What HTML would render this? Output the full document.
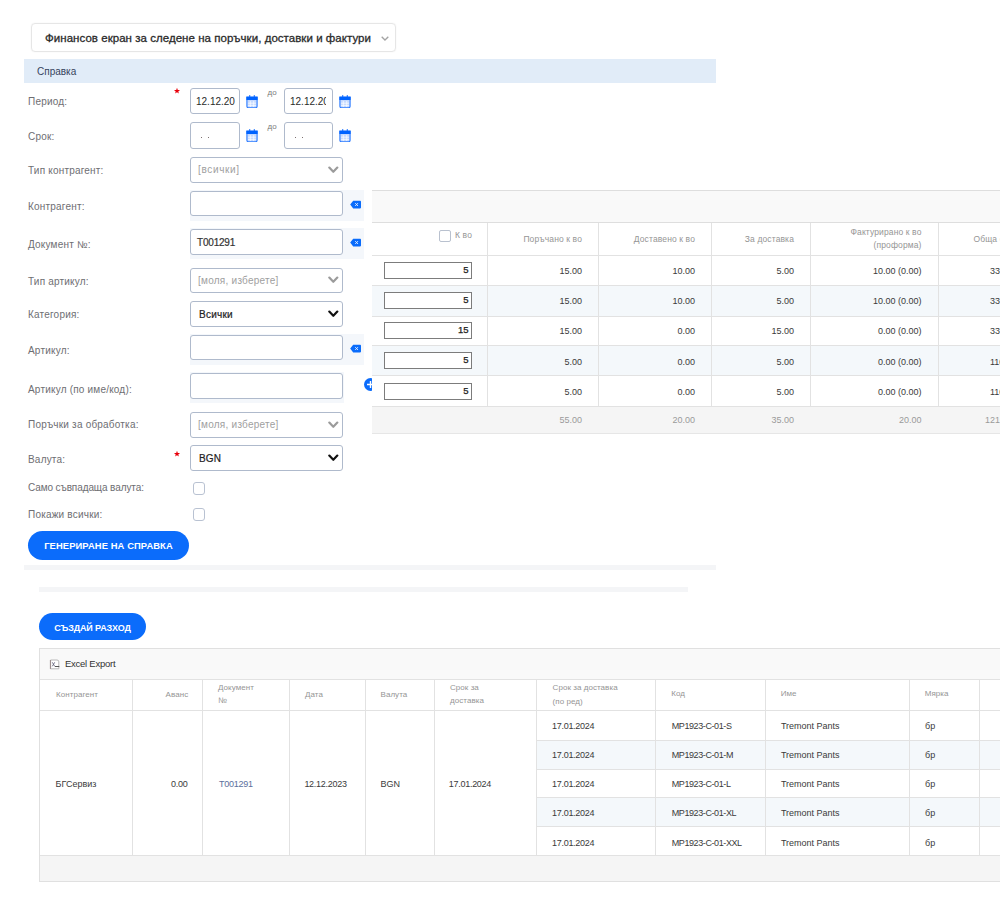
<!DOCTYPE html>
<html><head><meta charset="utf-8">
<style>
*{box-sizing:border-box;margin:0;padding:0}
html,body{width:1000px;height:924px;overflow:hidden;background:#fff}
body{position:relative;font-family:"Liberation Sans",sans-serif;color:#333;font-size:10px}
.a{position:absolute;white-space:nowrap}
.lbl{position:absolute;left:28px;color:#6e6e72;font-size:10px;line-height:12px;white-space:nowrap;letter-spacing:0.2px}
.inp{position:absolute;left:190px;border:1.5px solid #afbacc;border-radius:3px;background:#fff}
.sel{width:153px;height:26px}
.sel .t{position:absolute;left:6px;top:7px;font-size:10px;line-height:12px;color:#333;letter-spacing:-0.2px}
.sel .t.ph{color:#a0a0a0;letter-spacing:0.25px;left:7px;top:6.2px}
.chev{position:absolute;right:3.5px;top:7.6px;width:11px;height:8px}
.bgband{position:absolute;left:190px;background:#f4f7fb}
.clr{position:absolute;left:350px;width:11px;height:9px}
.star{position:absolute;left:175px;color:#e01515;font-size:10px;line-height:10px}
.cal{position:absolute;width:12px;height:13px}
.do{position:absolute;font-size:8px;color:#7a7a7a;line-height:8px}
.btn{position:absolute;background:#0b6cfb;border-radius:15px;color:#fff;font-weight:bold;font-size:9px;text-align:center;letter-spacing:0.1px}
.band{position:absolute;background:#f4f5f7}
/* top table */
#tt{position:absolute;left:372px;top:190px;width:640px;height:244px;background:#fff;overflow:hidden}
#tt .hd{position:absolute;left:0;top:0;width:100%;height:33px;background:#f9f9f9;border-top:1px solid #dedede;border-bottom:1px solid #dedede}
.vl{position:absolute;width:1px;background:#e2e2e2}
.hl{position:absolute;height:1px;background:#e2e2e2}
.row{position:absolute;left:0;width:100%}
.alt{background:#f4f8fb}
.th{position:absolute;color:#959595;font-size:8.5px;line-height:10px;white-space:nowrap;letter-spacing:0.12px}
.td{position:absolute;color:#3a3a3a;font-size:9px;line-height:10px;white-space:nowrap}
.rin{position:absolute;left:12px;width:88px;height:17px;border:1.5px solid #7c7c7c;background:#fff;font-size:9.5px;text-align:right;padding-right:2.5px;line-height:14px;color:#222;-webkit-text-stroke:0.25px #222}
/* bottom table */
#bt{position:absolute;left:39px;top:648px;width:980px;height:234px;border:1px solid #e0e0e0;border-right:none;background:#fff;overflow:hidden}
.b8{font-size:8px;letter-spacing:0.05px}
</style></head><body>
<svg width="0" height="0" style="position:absolute">
<defs>
<symbol id="calg" viewBox="0 0 12 13"><rect x="3" y="0.2" width="1.3" height="2.5" fill="#2a7bff"/><rect x="7.7" y="0.2" width="1.3" height="2.5" fill="#2a7bff"/><path d="M0.9 2 H11.1 V11.2 a1.6 1.6 0 0 1 -1.6 1.6 H2.5 a1.6 1.6 0 0 1 -1.6 -1.6 Z" fill="#c4d9ff" stroke="#2f7dff" stroke-width="1.1"/><rect x="0.4" y="1.8" width="11.2" height="3.2" fill="#0063ff"/><g stroke="#ffffff" stroke-width="0.7"><path d="M4.3 6 V12 M7.7 6 V12 M2 8.2 H10 M2 10.4 H10"/></g></symbol>
<symbol id="clrg" viewBox="0 0 11 9"><path d="M0.2 4.6 L3.2 0.8 H10.2 Q11 0.8 11 1.6 V7.6 Q11 8.4 10.2 8.4 H3.2 Z" fill="#0a6cfb"/><path d="M5.3 3.2 L7.9 5.9 M7.9 3.2 L5.3 5.9" stroke="#e8f0ff" stroke-width="1"/></symbol>
<symbol id="chevg" viewBox="0 0 11 8"><path d="M1.3 1.6 L5.3 5.8 L9.3 1.6" fill="none" stroke-width="2.2" stroke-linecap="round" stroke-linejoin="round"/></symbol>
</defs></svg>


<!-- dropdown -->
<div class="a" style="left:31px;top:23px;width:365px;height:28.5px;border:1px solid #e6e6e6;border-radius:4px;box-shadow:0 0 1.5px rgba(0,0,0,0.08)">
  <div class="a" style="left:13px;top:7px;font-size:11.5px;line-height:14px;color:#2a2a2a;-webkit-text-stroke:0.3px #2a2a2a;letter-spacing:0.04px">Финансов екран за следене на поръчки, доставки и фактури</div>
  <svg class="a" style="left:349px;top:11.5px" width="8" height="5" viewBox="0 0 8 5"><path d="M0.7 0.7 L4 4 L7.3 0.7" fill="none" stroke="#a3a3a3" stroke-width="1.3"/></svg>
</div>

<!-- Справка band -->
<div class="a" style="left:24px;top:59px;width:692px;height:24px;background:#e1ecf8"></div>
<div class="a" style="left:37px;top:66px;font-size:10px;line-height:12px;color:#36435c">Справка</div>

<!-- labels -->
<div class="lbl" style="top:96px">Период:</div>
<div class="lbl" style="top:131px">Срок:</div>
<div class="lbl" style="top:165px">Тип контрагент:</div>
<div class="lbl" style="top:201px">Контрагент:</div>
<div class="lbl" style="top:239px">Документ №:</div>
<div class="lbl" style="top:276px">Тип артикул:</div>
<div class="lbl" style="top:309px">Категория:</div>
<div class="lbl" style="top:345px">Артикул:</div>
<div class="lbl" style="top:384px">Артикул (по име/код):</div>
<div class="lbl" style="top:419px">Поръчки за обработка:</div>
<div class="lbl" style="top:454px">Валута:</div>
<div class="lbl" style="top:482px;letter-spacing:-0.1px">Само съвпадаща валута:</div>
<div class="lbl" style="top:509px">Покажи всички:</div>

<svg class="a" style="left:172.8px;top:87.3px" width="8" height="8"><polygon points="4.00,0.80 4.79,2.91 7.04,3.01 5.28,4.42 5.88,6.59 4.00,5.35 2.12,6.59 2.72,4.42 0.96,3.01 3.21,2.91" fill="#e8000b"/></svg>
<svg class="a" style="left:172.8px;top:450px" width="8" height="8"><polygon points="4.00,0.80 4.79,2.91 7.04,3.01 5.28,4.42 5.88,6.59 4.00,5.35 2.12,6.59 2.72,4.42 0.96,3.01 3.21,2.91" fill="#e8000b"/></svg>

<!-- date inputs -->
<div class="inp" style="top:88px;width:49.5px;height:26px"><div class="a" style="left:5px;top:6.5px;font-size:10px;line-height:12px;color:#2a2a2a">12.12.20</div></div>
<div class="inp" style="left:283.5px;top:88px;width:49.5px;height:26px"><div class="a" style="left:5.5px;top:6.5px;width:36px;overflow:hidden;font-size:10px;line-height:12px;color:#2a2a2a">12.12.20</div></div>
<div class="inp" style="top:122px;width:49.5px;height:26.5px"><div class="a" style="left:9.6px;top:13.7px;width:1.6px;height:1.6px;background:#7c7070"></div><div class="a" style="left:16.8px;top:13.7px;width:1.6px;height:1.6px;background:#7c7070"></div></div>
<div class="inp" style="left:283.5px;top:122px;width:49.5px;height:26.5px"><div class="a" style="left:10.2px;top:13.7px;width:1.6px;height:1.6px;background:#7c7070"></div><div class="a" style="left:17.4px;top:13.7px;width:1.6px;height:1.6px;background:#7c7070"></div></div>
<div class="do" style="left:267.5px;top:88.5px">до</div>
<div class="do" style="left:267.5px;top:122.5px">до</div>



<!-- calendar icons -->
<svg class="cal" style="left:245.5px;top:95px"><use href="#calg"/></svg>
<svg class="cal" style="left:338.5px;top:95px"><use href="#calg"/></svg>
<svg class="cal" style="left:245.5px;top:129px"><use href="#calg"/></svg>
<svg class="cal" style="left:338.5px;top:129px"><use href="#calg"/></svg>

<!-- light bands behind inputs -->
<div class="bgband" style="top:190px;width:174px;height:31px"></div>
<div class="bgband" style="top:228px;width:174px;height:31px"></div>
<div class="bgband" style="top:334px;width:174px;height:31px"></div>
<div class="bgband" style="top:372px;width:154px;height:31px"></div>

<!-- selects / inputs -->
<div class="inp sel" style="top:157px"><div class="t ph" style="letter-spacing:0.65px">[всички]</div><svg class="chev" style="stroke:#9b9b9b"><use href="#chevg"/></svg></div>
<div class="inp sel" style="top:190.6px;height:25.8px"></div>
<svg class="clr" style="top:200px"><use href="#clrg"/></svg>
<div class="inp sel" style="top:228.6px;height:26.6px"><div class="t" style="-webkit-text-stroke:0.2px #333">T001291</div></div>
<svg class="clr" style="top:238px"><use href="#clrg"/></svg>
<div class="inp sel" style="top:267.8px;height:25.6px"><div class="t ph">[моля, изберете]</div><svg class="chev" style="stroke:#9b9b9b"><use href="#chevg"/></svg></div>
<div class="inp sel" style="top:301.2px;height:25.6px"><div class="t" style="color:#222;left:8px;letter-spacing:0.25px;-webkit-text-stroke:0.2px #222">Всички</div><svg class="chev" style="stroke:#111"><use href="#chevg"/></svg></div>
<div class="inp sel" style="top:334.7px;height:25.8px"></div>
<svg class="clr" style="top:344px"><use href="#clrg"/></svg>
<div class="inp sel" style="top:372.8px;height:26.7px"></div>
<svg class="a" style="left:363.8px;top:378px" width="13" height="13" viewBox="0 0 13 13"><circle cx="6.5" cy="6.5" r="6.5" fill="#0b6cfb"/><path d="M6.5 3 V10 M3 6.5 H10" stroke="#fff" stroke-width="1.4"/></svg>
<div class="inp sel" style="top:412px;height:25.8px"><div class="t ph">[моля, изберете]</div><svg class="chev" style="stroke:#9b9b9b"><use href="#chevg"/></svg></div>
<div class="inp sel" style="top:445.3px;height:25.8px"><div class="t" style="color:#222;left:8px;letter-spacing:0.1px;-webkit-text-stroke:0.2px #222">BGN</div><svg class="chev" style="stroke:#111"><use href="#chevg"/></svg></div>

<!-- checkboxes -->
<div class="a" style="left:193px;top:482px;width:12px;height:12.5px;border:1.7px solid #b9c2d2;border-radius:3px;background:#fff"></div>
<div class="a" style="left:193px;top:508.3px;width:12px;height:12.7px;border:1.7px solid #b9c2d2;border-radius:3px;background:#fff"></div>

<!-- generate button -->
<div class="btn" style="left:28px;top:531px;width:161px;height:29px;line-height:30px;font-size:9.4px;letter-spacing:0.1px">ГЕНЕРИРАНЕ НА СПРАВКА</div>

<div class="band" style="left:24px;top:565px;width:692px;height:5px"></div>
<div class="band" style="left:39px;top:587px;width:649px;height:5px"></div>

<div class="btn" style="left:39px;top:613px;width:107px;height:27px;line-height:30px;font-size:9px;letter-spacing:-0.12px">СЪЗДАЙ РАЗХОД</div>

<!-- top table -->
<div id="tt">
<div class="hd"></div>
<div class="row alt" style="top:95px;height:31px"></div>
<div class="row alt" style="top:155px;height:30px"></div>
<div class="hl" style="left:0;width:640px;top:65px"></div>
<div class="hl" style="left:0;width:640px;top:95px"></div>
<div class="hl" style="left:0;width:640px;top:126px"></div>
<div class="hl" style="left:0;width:640px;top:155px"></div>
<div class="hl" style="left:0;width:640px;top:185px"></div>
<div class="hl" style="left:0;width:640px;top:216px"></div>
<div class="row" style="top:217px;height:26px;background:#f5f5f5"></div>
<div class="hl" style="left:0;width:640px;top:243px;background:#e6e6e6"></div>
<div class="vl" style="left:115px;top:33px;height:183px"></div>
<div class="vl" style="left:226px;top:33px;height:183px"></div>
<div class="vl" style="left:339px;top:33px;height:183px"></div>
<div class="vl" style="left:438px;top:33px;height:183px"></div>
<div class="vl" style="left:566px;top:33px;height:183px"></div>
<div class="a" style="left:67px;top:40px;width:12px;height:12px;border:1.5px solid #b9c1cf;border-radius:2px"></div>
<div class="th" style="right:540px;top:40.0px">К во</div>
<div class="th" style="right:430px;top:43.5px">Поръчано к во</div>
<div class="th" style="right:317px;top:43.5px">Доставено к во</div>
<div class="th" style="right:218px;top:43.5px">За доставка</div>
<div class="th" style="right:90.5px;top:37.0px">Фактурирано к во</div>
<div class="th" style="right:90.5px;top:50.0px">(проформа)</div>
<div class="th" style="left:601.5px;top:43.5px">Обща сума</div>
<div class="rin" style="top:71.5px">5</div>
<div class="td" style="right:430px;top:75.5px">15.00</div>
<div class="td" style="right:317px;top:75.5px">10.00</div>
<div class="td" style="right:218px;top:75.5px">5.00</div>
<div class="td" style="right:90.5px;top:75.5px">10.00 (0.00)</div>
<div class="td" style="left:618px;top:75.5px">330.00</div>
<div class="rin" style="top:102.0px">5</div>
<div class="td" style="right:430px;top:106.0px">15.00</div>
<div class="td" style="right:317px;top:106.0px">10.00</div>
<div class="td" style="right:218px;top:106.0px">5.00</div>
<div class="td" style="right:90.5px;top:106.0px">10.00 (0.00)</div>
<div class="td" style="left:618px;top:106.0px">330.00</div>
<div class="rin" style="top:132.0px">15</div>
<div class="td" style="right:430px;top:136.0px">15.00</div>
<div class="td" style="right:317px;top:136.0px">0.00</div>
<div class="td" style="right:218px;top:136.0px">15.00</div>
<div class="td" style="right:90.5px;top:136.0px">0.00 (0.00)</div>
<div class="td" style="left:618px;top:136.0px">330.00</div>
<div class="rin" style="top:162.3px">5</div>
<div class="td" style="right:430px;top:166.5px">5.00</div>
<div class="td" style="right:317px;top:166.5px">0.00</div>
<div class="td" style="right:218px;top:166.5px">5.00</div>
<div class="td" style="right:90.5px;top:166.5px">0.00 (0.00)</div>
<div class="td" style="left:618px;top:166.5px">110.00</div>
<div class="rin" style="top:193px">5</div>
<div class="td" style="right:430px;top:197.2px">5.00</div>
<div class="td" style="right:317px;top:197.2px">0.00</div>
<div class="td" style="right:218px;top:197.2px">5.00</div>
<div class="td" style="right:90.5px;top:197.2px">0.00 (0.00)</div>
<div class="td" style="left:618px;top:197.2px">110.00</div>
<div class="td" style="color:#9a9a9a;right:430px;top:225.0px">55.00</div>
<div class="td" style="color:#9a9a9a;right:317px;top:225.0px">20.00</div>
<div class="td" style="color:#9a9a9a;right:218px;top:225.0px">35.00</div>
<div class="td" style="color:#9a9a9a;right:90.5px;top:225.0px">20.00</div>
<div class="td" style="color:#9a9a9a;left:613px;top:225.0px">1210.00</div>
</div>
<!-- bottom table -->
<div id="bt">
<div class="row" style="top:0;height:30px;background:#f9f9f9"></div>
<div class="row alt" style="left:497px;top:92px;height:28px"></div>
<div class="row alt" style="left:497px;top:149px;height:28px"></div>
<div class="hl" style="left:0;width:1000px;top:30px"></div>
<div class="hl" style="left:0;width:1000px;top:61px"></div>
<div class="hl" style="left:497px;width:600px;top:91px"></div>
<div class="hl" style="left:497px;width:600px;top:120px"></div>
<div class="hl" style="left:497px;width:600px;top:148px"></div>
<div class="hl" style="left:497px;width:600px;top:177px"></div>
<div class="hl" style="left:0;width:1000px;top:206px"></div>
<div class="row" style="top:207px;height:27px;background:#f5f5f5"></div>
<div class="vl" style="left:92px;top:31px;height:175px"></div>
<div class="vl" style="left:162px;top:31px;height:175px"></div>
<div class="vl" style="left:249px;top:31px;height:175px"></div>
<div class="vl" style="left:325px;top:31px;height:175px"></div>
<div class="vl" style="left:394px;top:31px;height:175px"></div>
<div class="vl" style="left:496px;top:31px;height:175px"></div>
<div class="vl" style="left:615px;top:31px;height:175px"></div>
<div class="vl" style="left:725px;top:31px;height:175px"></div>
<div class="vl" style="left:869px;top:31px;height:175px"></div>
<div class="vl" style="left:939px;top:31px;height:175px"></div>
<svg class="a" style="left:9.2px;top:10px" width="12" height="12" viewBox="0 0 12 12"><path d="M1.6 1 H8 Q9.8 1 9.8 2.8 V9.8 H1.6 Z" fill="#fff" stroke="#b0b0b0" stroke-width="0.9"/><path d="M1.4 1 V9.9" stroke="#9a8a8a" stroke-width="1"/><path d="M3.3 3.3 L5.7 7.3 M5.7 3.3 L3.3 7.3" stroke="#6a6a80" stroke-width="0.9"/><path d="M5.9 7.5 H10.3" stroke="#555" stroke-width="1"/></svg>
<div class="a" style="left:25px;top:9px;font-size:9.5px;line-height:12px;color:#333;letter-spacing:-0.25px">Excel Export</div>
<div class="th b8" style="left:16px;top:41px">Контрагент</div>
<div class="th b8" style="right:830.8px;top:41px">Аванс</div>
<div class="th b8" style="left:178px;top:34px">Документ</div>
<div class="th b8" style="left:178px;top:47px">№</div>
<div class="th b8" style="left:265px;top:40.5px">Дата</div>
<div class="th b8" style="left:340.5px;top:40.5px">Валута</div>
<div class="th b8" style="left:410px;top:34px">Срок за</div>
<div class="th b8" style="left:410px;top:47px">доставка</div>
<div class="th b8" style="left:512.6px;top:34px">Срок за доставка</div>
<div class="th b8" style="left:512.6px;top:47.5px">(по ред)</div>
<div class="th b8" style="left:631.2px;top:40px">Код</div>
<div class="th b8" style="left:740.7px;top:40px">Име</div>
<div class="th b8" style="left:884.7px;top:40px">Мярка</div>
<div class="td" style="left:15.5px;top:130px;">БГСервиз</div>
<div class="td" style="right:831.4px;top:130px;letter-spacing:-0.2px">0.00</div>
<div class="td" style="left:179px;top:130px;color:#5b6f9c;letter-spacing:-0.25px">T001291</div>
<div class="td" style="left:264.4px;top:130px;;letter-spacing:-0.28px">12.12.2023</div>
<div class="td" style="left:340.6px;top:130px;">BGN</div>
<div class="td" style="left:408.8px;top:130px;;letter-spacing:-0.28px">17.01.2024</div>
<div class="td" style="left:512px;top:71.5px;;letter-spacing:-0.28px">17.01.2024</div>
<div class="td" style="left:631.7px;top:71.5px;;letter-spacing:-0.4px">MP1923-C-01-S</div>
<div class="td" style="left:740.9px;top:71.5px;">Tremont Pants</div>
<div class="td" style="left:885px;top:71.5px;">бр</div>
<div class="td" style="left:512px;top:100.5px;;letter-spacing:-0.28px">17.01.2024</div>
<div class="td" style="left:631.7px;top:100.5px;;letter-spacing:-0.4px">MP1923-C-01-M</div>
<div class="td" style="left:740.9px;top:100.5px;">Tremont Pants</div>
<div class="td" style="left:885px;top:100.5px;">бр</div>
<div class="td" style="left:512px;top:129.5px;;letter-spacing:-0.28px">17.01.2024</div>
<div class="td" style="left:631.7px;top:129.5px;;letter-spacing:-0.4px">MP1923-C-01-L</div>
<div class="td" style="left:740.9px;top:129.5px;">Tremont Pants</div>
<div class="td" style="left:885px;top:129.5px;">бр</div>
<div class="td" style="left:512px;top:159px;;letter-spacing:-0.28px">17.01.2024</div>
<div class="td" style="left:631.7px;top:159px;;letter-spacing:-0.4px">MP1923-C-01-XL</div>
<div class="td" style="left:740.9px;top:159px;">Tremont Pants</div>
<div class="td" style="left:885px;top:159px;">бр</div>
<div class="td" style="left:512px;top:188.5px;;letter-spacing:-0.28px">17.01.2024</div>
<div class="td" style="left:631.7px;top:188.5px;;letter-spacing:-0.4px">MP1923-C-01-XXL</div>
<div class="td" style="left:740.9px;top:188.5px;">Tremont Pants</div>
<div class="td" style="left:885px;top:188.5px;">бр</div>
</div>
</body></html>
